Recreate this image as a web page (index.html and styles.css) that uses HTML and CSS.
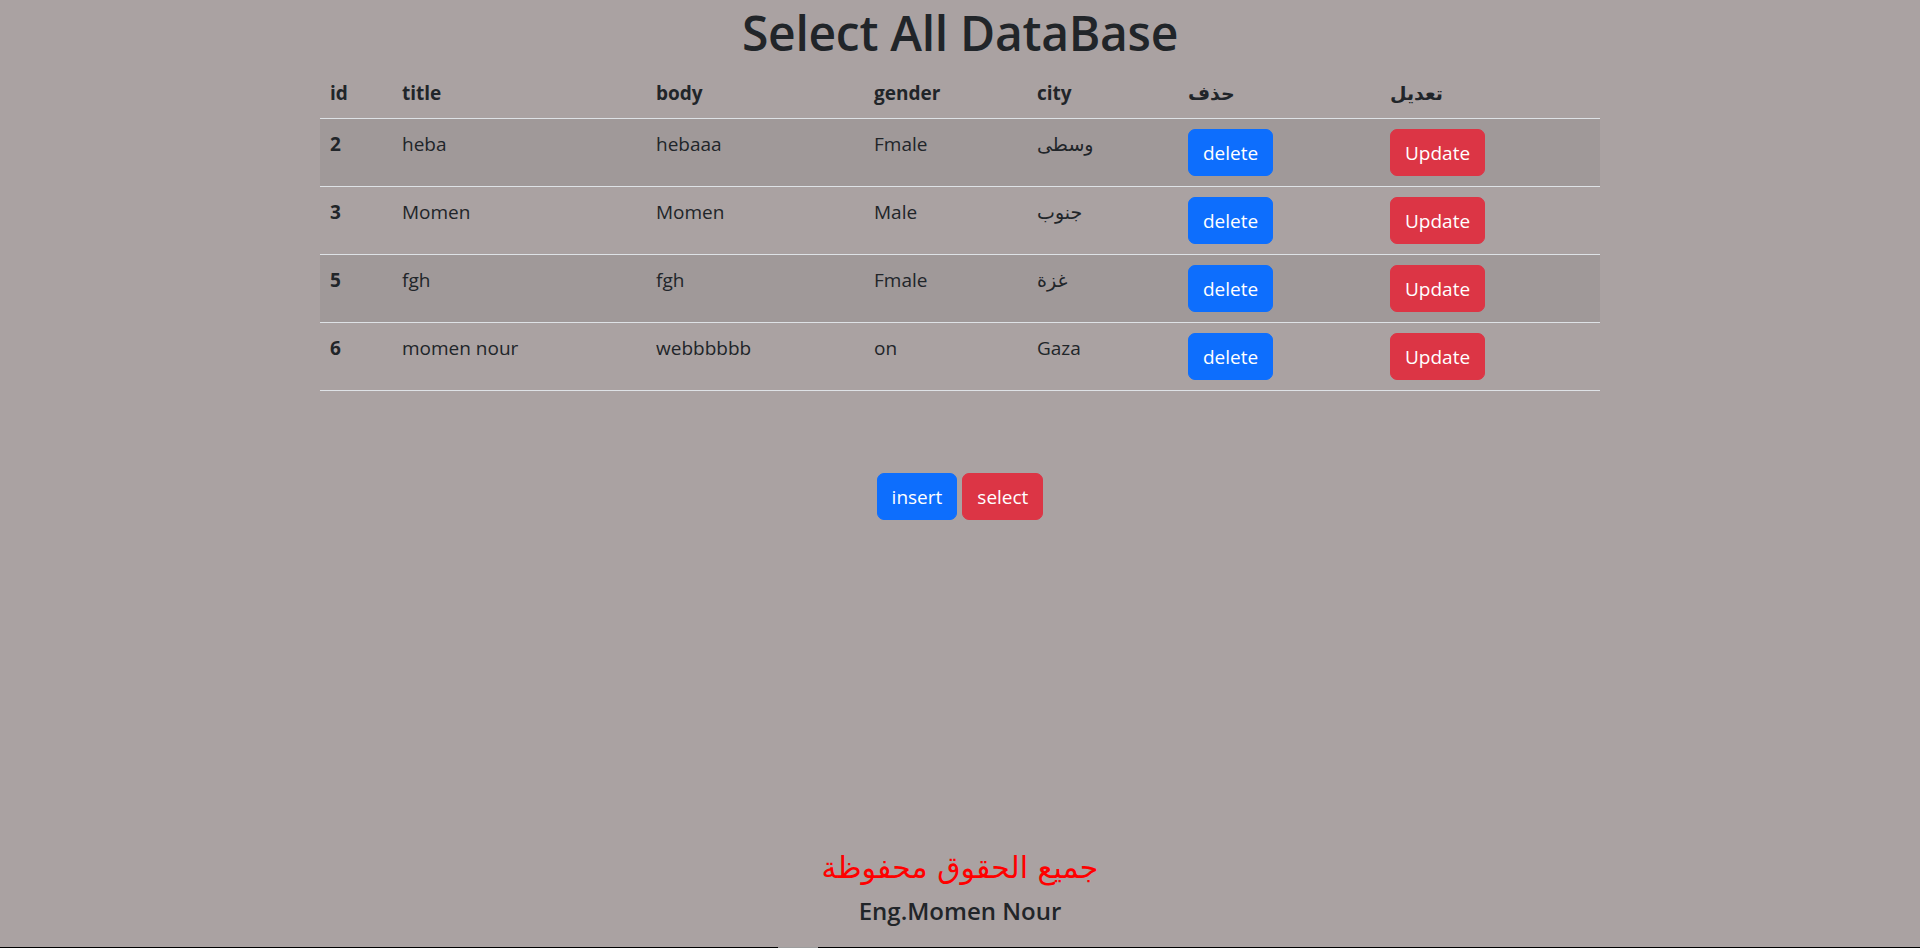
FILE: index.html
```html
<!DOCTYPE html>
<html lang="en">
<head>
<meta charset="utf-8">
<title>Select All DataBase</title>
<link rel="stylesheet" href="styles.css">
</head>
<body>
<div class="page">
  <main class="content">
    <h1 class="title">Select All DataBase</h1>
    <table class="data-table">
      <thead>
        <tr>
          <th class="c-id">id</th>
          <th class="c-title">title</th>
          <th class="c-body">body</th>
          <th class="c-gender">gender</th>
          <th class="c-city">city</th>
          <th class="c-del">حذف</th>
          <th class="c-upd">تعديل</th>
        </tr>
      </thead>
      <tbody>
        <tr class="striped">
          <th>2</th><td>heba</td><td>hebaaa</td><td>Fmale</td><td>وسطى</td>
          <td><a class="btn btn-primary">delete</a></td>
          <td><a class="btn btn-danger">Update</a></td>
        </tr>
        <tr>
          <th>3</th><td>Momen</td><td>Momen</td><td>Male</td><td>جنوب</td>
          <td><a class="btn btn-primary">delete</a></td>
          <td><a class="btn btn-danger">Update</a></td>
        </tr>
        <tr class="striped">
          <th>5</th><td>fgh</td><td>fgh</td><td>Fmale</td><td>غزة</td>
          <td><a class="btn btn-primary">delete</a></td>
          <td><a class="btn btn-danger">Update</a></td>
        </tr>
        <tr>
          <th>6</th><td>momen nour</td><td>webbbbbb</td><td>on</td><td>Gaza</td>
          <td><a class="btn btn-primary">delete</a></td>
          <td><a class="btn btn-danger">Update</a></td>
        </tr>
      </tbody>
    </table>
    <div class="actions">
      <a class="btn btn-primary">insert</a>
      <a class="btn btn-danger">select</a>
    </div>
  </main>
  <footer class="footer">
    <h3 class="rights">جميع الحقوق محفوظة</h3>
    <h5 class="author">Eng.Momen Nour</h5>
  </footer>
  <div class="bottom-line"><span class="bottom-gap"></span></div>
</div>
</body>
</html>
```

FILE: styles.css
```css
* { box-sizing: border-box; }

html, body {
  margin: 0;
  padding: 0;
}

body {
  background: #aaa2a2;
  color: #212529;
  font-family: "Open Sans", "DejaVu Sans", sans-serif;
  font-size: 20px;
  line-height: 1.5;
}

.page {
  height: 948px;
  display: flex;
  flex-direction: column;
  overflow: hidden;
}

.content {
  display: flex;
  flex-direction: column;
  align-items: center;
}

.title {
  margin: 0 0 3px;
  font-size: 48px;
  font-weight: 600;
  line-height: 65px;
  letter-spacing: -0.3px;
}

.data-table {
  width: 1280px;
  border-collapse: collapse;
  table-layout: fixed;
  margin-bottom: 20px;
}

.data-table th,
.data-table td {
  padding: 10px;
  text-align: left;
  vertical-align: top;
  border-bottom: 1px solid #dee2e6;
  font-size: 19px;
  line-height: 30px;
}

.data-table th { font-weight: 700; }
.data-table td { font-weight: 400; }

.data-table tr.striped > * {
  background: rgba(0, 0, 0, 0.055);
}

.c-id { width: 72px; }
.c-title { width: 254px; }
.c-body { width: 218px; }
.c-gender { width: 163px; }
.c-city { width: 151px; }
.c-del { width: 202px; }
.c-upd { width: 220px; }

.btn {
  display: inline-block;
  padding: 7.5px 14px;
  font-size: 19px;
  line-height: 30px;
  border-radius: 7px;
  color: #fff;
  text-decoration: none;
  border: 1px solid transparent;
  font-family: "Open Sans", sans-serif;
  vertical-align: top;
}

.btn-primary { background: #0d6efd; border-color: #0d6efd; }
.btn-danger { background: #dc3545; border-color: #dc3545; }

.actions {
  margin-top: 62px;
  display: flex;
  gap: 5px;
}

.footer {
  margin-top: auto;
  display: flex;
  flex-direction: column;
  align-items: center;
  padding-bottom: 21px;
}

.rights {
  margin: 0;
  color: #ff0000;
  font-size: 30px;
  font-weight: 500;
  line-height: 36px;
  font-family: "DejaVu Sans", sans-serif;
}

.author {
  margin: 10px 0 0;
  font-size: 24px;
  font-weight: 600;
  line-height: 30px;
}

.bottom-line {
  height: 1px;
  background: #000;
  display: flex;
}

.bottom-gap {
  margin-left: 778px;
  width: 40px;
  background: #9c9c9c;
}
```
